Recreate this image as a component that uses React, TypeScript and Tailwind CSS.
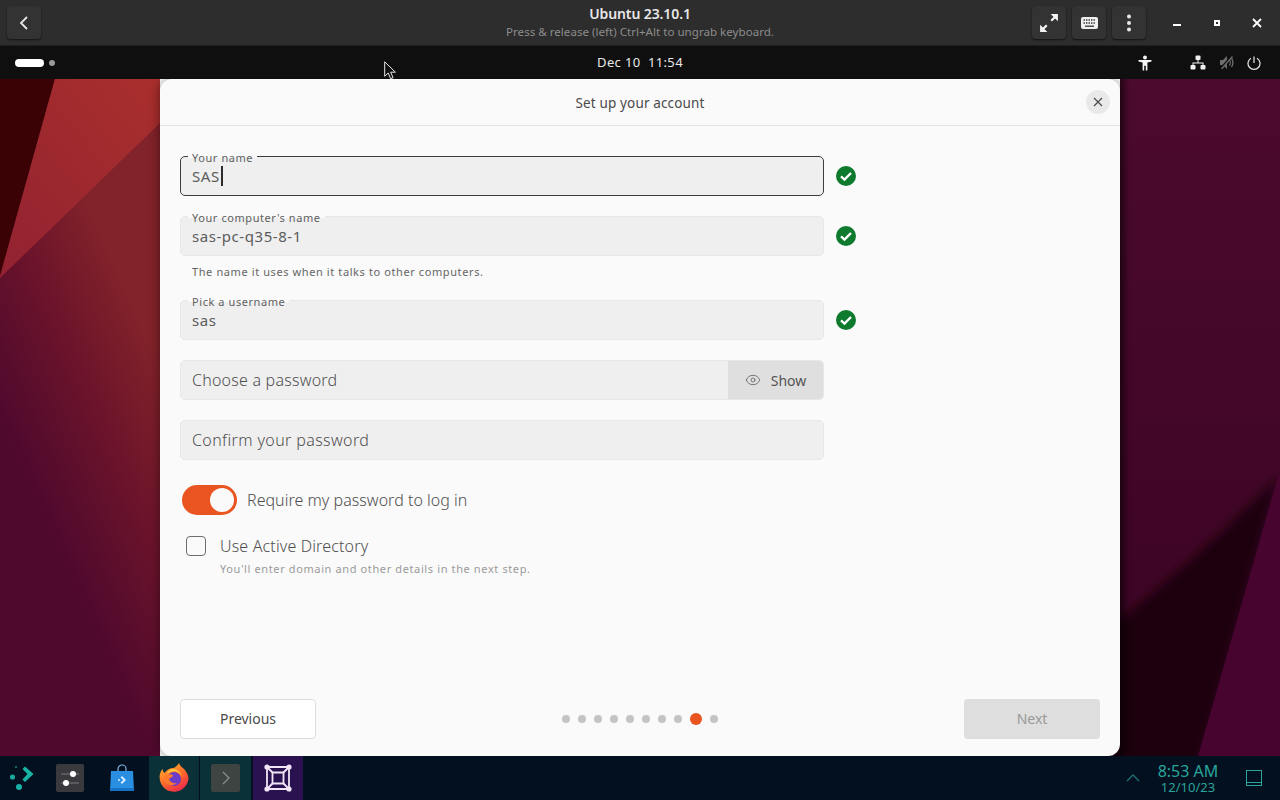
import { Eye } from 'lucide-react';

const FONT = "font-['Noto_Sans',sans-serif]";

const Wallpaper = () => (
  <svg className="absolute inset-0 h-full w-full" viewBox="0 0 1280 677" preserveAspectRatio="none">
    <defs>
      <linearGradient id="wallBase" x1="0.3" y1="0.05" x2="0.05" y2="0.52">
        <stop offset="0" stopColor="#82222a" />
        <stop offset="0.45" stopColor="#6c142b" />
        <stop offset="1" stopColor="#4f092d" />
      </linearGradient>
      <linearGradient id="wallRed" x1="1" y1="0" x2="0" y2="1">
        <stop offset="0" stopColor="#a92f2c" />
        <stop offset="1" stopColor="#922231" />
      </linearGradient>
      <linearGradient id="wallRight" x1="0" y1="0" x2="0" y2="1">
        <stop offset="0" stopColor="#4c0a2e" />
        <stop offset="1" stopColor="#3a0322" />
      </linearGradient>
      <linearGradient id="wallShade" x1="0" y1="0" x2="1" y2="0">
        <stop offset="0" stopColor="#000000" stopOpacity="0.4" />
        <stop offset="1" stopColor="#000000" stopOpacity="0" />
      </linearGradient>
      <filter id="softEdge" x="-10%" y="-10%" width="120%" height="120%">
        <feGaussianBlur stdDeviation="5" />
      </filter>
    </defs>
    <rect x="0" y="0" width="160" height="677" fill="url(#wallBase)" />
    <rect x="1120" y="0" width="160" height="677" fill="url(#wallRight)" />
    <polygon points="0,0 55,0 0,197" fill="#3a0205" />
    <polygon points="55,0 160,0 160,44 0,199 0,197" fill="url(#wallRed)" />
    <path d="M1100 545 L1125 537 L1182 489 L1225 450 L1278 398 L1198 690 L1100 690 Z" fill="#1c0010" filter="url(#softEdge)" />
    <polygon points="1278,398 1290,398 1290,677 1198,677" fill="#47042f" />
    <rect x="1120" y="0" width="10" height="677" fill="url(#wallShade)" />
  </svg>
);

const Check = () => (
  <svg width="20" height="20" viewBox="0 0 20 20" className="ml-3 shrink-0">
    <circle cx="10" cy="10" r="10" fill="#0e7a2e" />
    <path d="M5 10.400 8.500 13.600 15 7" fill="none" stroke="#fff" strokeWidth="2.400" />
  </svg>
);

const Field = ({ label, value, focused }: { label: string; value: string; focused?: boolean }) => (
  <div className="flex items-center">
    <div
      className={`relative flex h-10 w-[644px] items-end rounded-[5px] border bg-[#efefef] px-[11px] pb-[9px] ${
        focused ? 'border-[#3c3c3c]' : 'border-[#e8e8e8]'
      }`}
    >
      <span className="absolute left-[7px] top-[-5px] bg-[linear-gradient(#fafafa_50%,#efefef_50%)] px-[4px] text-[11px] leading-[12px] tracking-[0.57px] text-[#5f5f5f]">
        {label}
      </span>
      <span className="text-[15px] leading-[20px] tracking-[0.55px] text-[#5c5c5c]">{value}</span>
      {focused && <span className="ml-[1px] h-[20px] w-[2px] bg-[#2b2b2b]" />}
    </div>
    <Check />
  </div>
);

const TitleButton = ({ children }: { children: React.ReactNode }) => (
  <div className="flex h-[33px] w-[34px] items-center justify-center rounded-[4px] bg-[#333333] shadow-[0_1px_2px_rgba(0,0,0,0.6)]">
    {children}
  </div>
);

const TitleBar = () => (
  <div className="grid h-[46px] shrink-0 grid-cols-[1fr_auto_1fr] items-center border-b border-[#1f1f1f] bg-[#2d2d2d]">
    <div className="pl-[7px]">
      <TitleButton>
        <svg width="14" height="16" viewBox="0 0 14 16">
          <path d="M10 2 4 8l6 6" fill="none" stroke="#e6e6e6" strokeWidth="1.800" />
        </svg>
      </TitleButton>
    </div>
    <div className="text-center">
      <div className="text-[14px] font-semibold leading-[18px] tracking-[-0.1px] text-[#e8e8e8]">Ubuntu 23.10.1</div>
      <div className="pt-[1px] text-[11.6px] leading-[16px] text-[#8c8c8c]">Press &amp; release (left) Ctrl+Alt to ungrab keyboard.</div>
    </div>
    <div className="flex items-center justify-end pr-[3px]">
      <div className="flex items-center gap-[6px]">
        <TitleButton>
          <svg width="20" height="20" viewBox="0 0 18 18" fill="none" stroke="#f5f5f5" strokeWidth="2">
            <path d="M2 16 7 11M11 7l5-5" />
            <path d="M1 10.500V17h6.500L1 10.500ZM17 7.500V1h-6.500L17 7.500Z" fill="#f5f5f5" stroke="none" />
          </svg>
        </TitleButton>
        <TitleButton>
          <svg width="17" height="12" viewBox="0 0 17 12">
            <rect width="17" height="12" rx="2" fill="#f0f0f0" />
            <path d="M2.500 3h12M2.500 6h12" stroke="#333" strokeWidth="1.300" strokeDasharray="1.400 1.100" />
            <path d="M4 9.200h9" stroke="#333" strokeWidth="1.300" />
          </svg>
        </TitleButton>
        <TitleButton>
          <svg width="6" height="18" viewBox="0 0 6 18" fill="#e8e8e8">
            <circle cx="3" cy="2.500" r="2" />
            <circle cx="3" cy="9" r="2" />
            <circle cx="3" cy="15.500" r="2" />
          </svg>
        </TitleButton>
      </div>
      <div className="ml-[11px] flex items-center">
        <div className="flex h-10 w-10 items-center justify-center">
          <div className="mt-[4px] h-[2px] w-2 bg-white" />
        </div>
        <div className="flex h-10 w-10 items-center justify-center">
          <div className="h-[6px] w-[6px] border-[2px] border-white" />
        </div>
        <div className="flex h-10 w-10 items-center justify-center">
          <svg width="10" height="10" viewBox="0 0 10 10">
            <path d="M1 1l8 8M9 1 1 9" stroke="#fff" strokeWidth="1.800" />
          </svg>
        </div>
      </div>
    </div>
  </div>
);

const GnomeBar = () => (
  <div className="relative flex h-[33px] shrink-0 items-center bg-[#0f0f0f] pl-[15px] pr-[19px]">
    <div className="h-[8px] w-[29px] rounded-full bg-white" />
    <div className="ml-[5px] h-[6px] w-[6px] rounded-full bg-[#9a9a9a]" />
    <div className="absolute inset-x-0 text-center text-[13px] tracking-[0.35px] text-[#e8e8e8]">Dec 10&nbsp;&nbsp;11:54</div>
    <div className="relative ml-auto flex items-center">
      <svg width="14" height="16" viewBox="0 0 14 16" fill="#f5f5f5">
        <circle cx="7" cy="2.400" r="2" />
        <path d="M0.500 5h13v1.600L9.400 7.400V15.500H7.800v-4.800H6.200v4.800H4.600V7.400L0.500 6.600Z" />
      </svg>
      <svg className="ml-[38px]" width="16" height="15" viewBox="0 0 16 15" fill="#f0f0f0">
        <rect x="5.500" y="0.500" width="5" height="4.500" rx="1" />
        <rect x="0.500" y="10" width="5" height="4.500" rx="1" />
        <rect x="10.500" y="10" width="5" height="4.500" rx="1" />
        <path d="M7.500 5h1v2.500H13.500V10h-1V8.500h-9V10h-1V7.500h5Z" />
      </svg>
      <svg className="ml-[13px]" width="15" height="15" viewBox="0 0 15 15" fill="none" stroke="#6e6e6e">
        <path d="M1 5h3l4-4v13l-4-4H1Z" fill="#6e6e6e" stroke="none" />
        <path d="M10.500 4.500c1 1.500 1 4.500 0 6M12.500 3c1.600 2.500 1.600 6.500 0 9" strokeWidth="1.300" />
        <path d="M1.500 14 13 1" stroke="#0f0f0f" strokeWidth="2.600" />
        <path d="M2.500 14 13.500 1.500" strokeWidth="1.300" />
      </svg>
      <svg className="ml-[13px]" width="14" height="14" viewBox="0 0 14 14" fill="none" stroke="#e8e8e8" strokeWidth="1.200">
        <path d="M7 0.500v6.500" />
        <path d="M4 2.200a6 6 0 1 0 6 0" />
      </svg>
    </div>
    <svg className="absolute left-[384px] top-[15px]" width="13" height="20" viewBox="0 0 13 20">
      <path d="M0.700 0.800v14.500l3.500-3.300 2.400 5.700 2.500-1-2.400-5.500h4.700Z" fill="#111" stroke="#e8e8e8" strokeWidth="1" />
    </svg>
  </div>
);

const Dialog = () => (
  <div className="relative flex h-full flex-col rounded-[12px] bg-[#fafafa] shadow-[0_0_12px_rgba(0,0,0,0.45)]">
    <div className="flex h-[47px] shrink-0 items-center border-b border-[#e3e3e3] pr-[10px]">
      <div className="flex-1 pl-[34px] pt-[2px] text-center text-[13.5px] tracking-[0.15px] text-[#4a4a4a]">Set up your account</div>
      <div className="flex h-6 w-6 items-center justify-center rounded-full bg-[#e9e9e9]">
        <svg width="10" height="10" viewBox="0 0 10 10">
          <path d="M1 1l8 8M9 1 1 9" stroke="#4a4a4a" strokeWidth="1.200" />
        </svg>
      </div>
    </div>
    <div className="flex flex-1 flex-col px-5 pb-[17px] pt-[30px]">
      <Field label="Your name" value="SAS" focused />
      <div className="mt-5">
        <Field label="Your computer's name" value="sas-pc-q35-8-1" />
      </div>
      <div className="ml-3 mt-2 h-[16px] text-[11px] leading-[16px] tracking-[0.6px] text-[#666666]">
        The name it uses when it talks to other computers.
      </div>
      <div className="mt-5">
        <Field label="Pick a username" value="sas" />
      </div>
      <div className="mt-5 flex h-10 w-[644px] overflow-hidden rounded-[5px] border border-[#e8e8e8] bg-[#efefef]">
        <div className="flex flex-1 items-center px-[11px] text-[16px] font-light tracking-[0.22px] text-[#4f4f4f]">Choose a password</div>
        <div className="flex w-[95px] items-center justify-center gap-[10px] bg-[#dfdfdf] text-[14px] text-[#555555]">
          <Eye size={16} strokeWidth={1.300} color="#666666" />
          <span>Show</span>
        </div>
      </div>
      <div className="mt-5 flex h-10 w-[644px] items-center rounded-[5px] border border-[#e8e8e8] bg-[#efefef] px-[11px] text-[16px] font-light tracking-[0.38px] text-[#4f4f4f]">
        Confirm your password
      </div>
      <div className="ml-[2px] mt-[25px] flex items-center">
        <div className="flex h-[30px] w-[55px] items-center justify-end rounded-full bg-[#e95420] pr-[3px]">
          <div className="h-6 w-6 rounded-full bg-[#fafafa]" />
        </div>
        <span className="ml-[10px] text-[16px] font-light tracking-[0.03px] text-[#4f4f4f]">Require my password to log in</span>
      </div>
      <div className="ml-[6px] mt-[16px] flex">
        <div className="mt-[5px] h-5 w-5 rounded-[4px] border border-[#6e6e6e] bg-[#fafafa]" />
        <div className="ml-[14px]">
          <div className="text-[16px] font-light leading-[30px] tracking-[0.15px] text-[#4f4f4f]">Use Active Directory</div>
          <div className="text-[11px] leading-[16px] tracking-[0.62px] text-[#9a9a9a]">
            You'll enter domain and other details in the next step.
          </div>
        </div>
      </div>
      <div className="mt-auto flex items-center justify-between">
        <div className="flex h-10 w-[136px] items-center justify-center rounded-[4px] border border-[#dddddd] bg-white pb-[2px] text-[14px] text-[#4a4a4a]">
          Previous
        </div>
        <div className="flex items-center gap-2">
          {[0, 1, 2, 3, 4, 5, 6, 7].map((dot) => (
            <div key={dot} className="h-2 w-2 rounded-full bg-[#c4c4c4]" />
          ))}
          <div className="h-3 w-3 rounded-full bg-[#e95420]" />
          <div className="h-2 w-2 rounded-full bg-[#c4c4c4]" />
        </div>
        <div className="flex h-10 w-[136px] items-center justify-center rounded-[4px] bg-[#dedede] pb-[2px] text-[14px] text-[#999999]">
          Next
        </div>
      </div>
    </div>
  </div>
);

const Taskbar = () => (
  <div className="flex h-[44px] shrink-0 items-center bg-[#03101f]">
    <div className="ml-[9px] flex w-[26px] justify-center">
      <svg width="26" height="26" viewBox="0 0 26 26">
        <path d="M16 1.500 24.500 9 16 17l-2.500-2.500L18.500 9l-5-5Z" fill="#19b3a6" />
        <circle cx="3.500" cy="12" r="2.600" fill="#19a89c" />
        <circle cx="10" cy="22" r="3" fill="#19b3a6" />
        <circle cx="7" cy="2" r="1" fill="#148a83" />
      </svg>
    </div>
    <div className="ml-[21px] flex h-[28px] w-[28px] flex-col justify-center gap-[7px] rounded-[2px] bg-[#3a3a3e] px-[5px]">
      <div className="relative h-[2px] bg-[#5a5a5e]">
        <div className="absolute right-[3px] top-[-2px] h-[6px] w-[6px] rounded-full bg-white" />
      </div>
      <div className="relative h-[2px] bg-[#5a5a5e]">
        <div className="absolute left-[2px] top-[-2px] h-[6px] w-[6px] rounded-full bg-white" />
      </div>
    </div>
    <div className="ml-[26px] flex w-[24px] justify-center">
      <svg width="24" height="28" viewBox="0 0 24 28">
        <path d="M8 8V5a4 4 0 0 1 8 0v3" fill="none" stroke="#7fb6e0" strokeWidth="1.200" />
        <path d="M1 7h22l1 20H0Z" fill="#2a8fe0" />
        <path d="M0.300 24h23.400L24 27H0Z" fill="#1673c4" />
        <path d="M12 12l4 4-4 4-1.400-1.400 2.600-2.600-2.600-2.600Z" fill="#d8eeff" />
        <circle cx="9" cy="16" r="1" fill="#d8eeff" />
      </svg>
    </div>
    <div className="ml-[15px] flex h-full w-[50px] items-center justify-center bg-[#0a3138]">
      <svg width="32" height="32" viewBox="0 0 32 32">
        <defs>
          <linearGradient id="foxBody" x1="0.2" y1="0" x2="0.8" y2="1">
            <stop offset="0" stopColor="#ffb22e" />
            <stop offset="0.5" stopColor="#ff6a2a" />
            <stop offset="1" stopColor="#e8224f" />
          </linearGradient>
        </defs>
        <path d="M21 1c1 3 3 4 5 6 3 3 4.500 7 4.500 10A14.500 14.500 0 1 1 2.600 10c.5-1 1-2 2-3 0 2 1 3 2 4 2-3 5-5 9-5 2-1 4-2.500 5.400-5Z" fill="url(#foxBody)" />
        <circle cx="16" cy="17" r="7" fill="#6a3cc8" />
        <path d="M9 12c3-3 8-4 12-1 3 2 4 6 3 9 2-6-3-13-9-13-3 0-5 2-6 5Z" fill="#ffc53a" />
        <path d="M7 14c3-2 6-2 8-1 0 2-3 3-4 4 1 3 4 5 8 4-3 3-9 3-12-1-1-2-1-4 0-6Z" fill="#ff7a2a" />
      </svg>
    </div>
    <div className="ml-[1px] flex h-full w-[51px] items-center justify-center bg-[#0a3138]">
      <div className="flex h-[28px] w-[29px] items-center justify-center rounded-[2px] bg-[#3d4441]">
        <svg width="10" height="14" viewBox="0 0 10 14">
          <path d="M2 1l6 6-6 6" fill="none" stroke="#8a908c" strokeWidth="1.300" />
        </svg>
      </div>
    </div>
    <div className="ml-[2px] flex h-full w-[50px] items-center justify-center bg-[#2a1250]">
      <svg width="30" height="30" viewBox="0 0 30 30" fill="none" stroke="#f0e6f5" strokeWidth="1.800">
        <path d="M4 4h22v22H4Z" />
        <path d="M9.500 9.500h11v11h-11Z" />
        <path d="M4 4l5.500 5.500M26 4l-5.500 5.500M4 26l5.500-5.500M26 26l-5.500-5.500" />
        <g fill="#f0e6f5" stroke="none">
          <circle cx="4" cy="4" r="2.600" />
          <circle cx="26" cy="4" r="2.600" />
          <circle cx="4" cy="26" r="2.600" />
          <circle cx="26" cy="26" r="2.600" />
        </g>
      </svg>
    </div>
    <div className="ml-auto flex items-center pr-[18px]">
      <svg width="14" height="8" viewBox="0 0 14 8">
        <path d="M1 7l6-6 6 6" fill="none" stroke="#1f6f76" strokeWidth="1.300" />
      </svg>
      <div className="ml-[17px] w-[62px] pt-[1px] text-center text-[#2aa39b]">
        <div className="text-[16px] leading-[17px]">8:53 AM</div>
        <div className="text-[13px] leading-[15px]">12/10/23</div>
      </div>
      <svg className="ml-[27px]" width="16" height="16" viewBox="0 0 16 16" fill="none" stroke="#2aa39b" strokeWidth="1">
        <rect x="0.500" y="0.500" width="15" height="15" />
        <path d="M0.500 12.500h15" />
      </svg>
    </div>
  </div>
);

export default function App() {
  return (
    <div className={`flex h-[800px] w-[1280px] flex-col overflow-hidden ${FONT}`}>
      <TitleBar />
      <GnomeBar />
      <div className="relative flex-1 overflow-hidden px-[160px]">
        <Wallpaper />
        <Dialog />
      </div>
      <Taskbar />
    </div>
  );
}
